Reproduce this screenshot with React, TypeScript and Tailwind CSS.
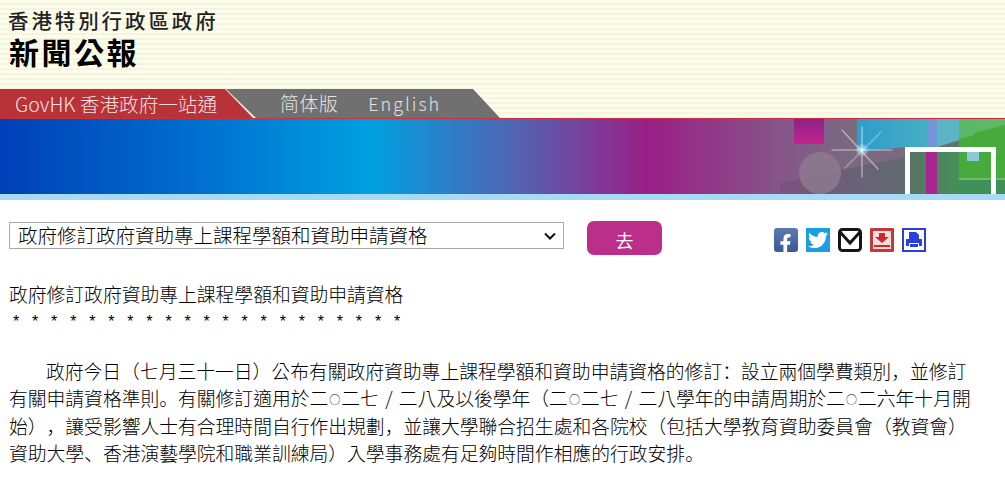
import { FaFacebookF, FaTwitter } from 'react-icons/fa'

const cjk = "font-['Noto_Sans_CJK_TC','Liberation_Sans',sans-serif]"

// the source page's font has a small ring and a spaced slash, so these get their own cells
function Ring() {
  return <span className="inline-block w-[13px] text-center indent-0 text-[11px] leading-none align-[2px]">○</span>
}

function Slash() {
  return <span className="inline-block w-[20px] text-center indent-0">/</span>
}

// low-left punctuation as in the reference
function Pn({ children }: { children: React.ReactNode }) {
  return <span className="font-['Noto_Sans_CJK_SC',sans-serif]">{children}</span>
}

function BannerArt() {
  return (
    <svg className="absolute right-0 top-0 h-[75px] w-[225px]" viewBox="0 0 225 75">
      <defs>
        <linearGradient id="pink" x1="0" y1="0" x2="0" y2="1">
          <stop offset="0" stopColor="#8f2088" />
          <stop offset="1" stopColor="#c2258f" />
        </linearGradient>
        <linearGradient id="sky" x1="0" y1="0" x2="1" y2="0">
          <stop offset="0" stopColor="#2f9ccb" />
          <stop offset="1" stopColor="#45aec4" />
        </linearGradient>
        <linearGradient id="low" x1="0" y1="0" x2="1" y2="0">
          <stop offset="0" stopColor="#7f5080" />
          <stop offset="0.3" stopColor="#6a6076" />
          <stop offset="0.6" stopColor="#5f6c70" />
          <stop offset="1" stopColor="#4f8a5e" />
        </linearGradient>
        <linearGradient id="inner" x1="0" y1="0" x2="1" y2="0">
          <stop offset="0" stopColor="#5a7566" />
          <stop offset="1" stopColor="#458f58" />
        </linearGradient>
        <radialGradient id="glow">
          <stop offset="0" stopColor="#fff" stopOpacity="0.95" />
          <stop offset="0.35" stopColor="#cfe8f5" stopOpacity="0.6" />
          <stop offset="1" stopColor="#fff" stopOpacity="0" />
        </radialGradient>
      </defs>
      <path d="M0 64 L125 38 L225 9 V75 H0Z" fill="url(#low)" />
      <rect x="14" y="0" width="30" height="25" fill="url(#pink)" />
      <path d="M77 0 H147 V28 H125 L77 33Z" fill="url(#sky)" />
      <path d="M147 0 H157 V28 H147Z" fill="#6f96d6" />
      <path d="M157 0 H179 V21 L157 28Z" fill="#5db4c6" />
      <path d="M179 0 H225 V59 H179Z" fill="#47aa3c" />
      <path d="M179 0 H225 V6 L194 14 V0Z" fill="#5fb866" />
      <path d="M179 0 H194 V16 L179 20Z" fill="#5ab968" />
      <rect x="179" y="59" width="46" height="2" fill="#6dbb6a" />
      <rect x="179" y="61" width="46" height="14" fill="#3f8f58" />
      <rect x="130" y="33" width="49" height="42" fill="url(#inner)" />
      <rect x="146" y="28" width="11" height="47" fill="#a8268f" />
      <rect x="187" y="33" width="12" height="9" fill="#8ec6dc" />
      <path d="M125 75 V28 H216 V75 H211 V33 H130 V75Z" fill="#fff" />
      <circle cx="40" cy="54" r="21" fill="#8c7a8e" fillOpacity="0.85" />
      <g stroke="#fff" strokeLinecap="round">
        <path d="M52 31 H112" strokeOpacity="0.4" strokeWidth="1.5" />
        <path d="M82 8 V58" strokeOpacity="0.45" strokeWidth="1.5" />
        <path d="M62 11 L98 50" strokeOpacity="0.45" strokeWidth="1.5" />
        <path d="M65 49 L101 13" strokeOpacity="0.3" strokeWidth="1.5" />
      </g>
      <circle cx="82" cy="31" r="7" fill="url(#glow)" />
    </svg>
  )
}

function MailIcon() {
  return (
    <svg viewBox="0 0 24 24" className="h-6 w-6">
      <rect x="1.5" y="1.5" width="21" height="21" rx="3" fill="#fff" stroke="#151515" strokeWidth="3" />
      <path d="M2 4 L12 15 L22 4" fill="none" stroke="#151515" strokeWidth="3" />
    </svg>
  )
}

function SaveIcon() {
  return (
    <svg viewBox="0 0 24 24" className="h-6 w-6">
      <rect x="0" y="0" width="24" height="24" rx="1" fill="#c23a3c" />
      <rect x="3" y="3" width="18" height="18" fill="#f0dedc" />
      <path d="M9 5 H15 V9 H19 L12 15 L5 9 H9Z" fill="#d0262c" />
      <rect x="4" y="17" width="16" height="2" fill="#d0262c" />
    </svg>
  )
}

function PrintIcon() {
  return (
    <svg viewBox="0 0 24 24" className="h-6 w-6">
      <rect x="0" y="0" width="24" height="24" fill="#2a3fe0" />
      <rect x="2" y="2" width="20" height="20" fill="#fff" />
      <path d="M7 4 H14 L17 7 V11 H7Z" fill="#2a3fe0" />
      <path d="M4 11 H20 V18 H17 V15 H7 V18 H4Z" fill="#2a3fe0" />
      <rect x="8" y="16" width="8" height="3" fill="#2a3fe0" />
    </svg>
  )
}

export default function App() {
  return (
    <div className={`h-[489px] w-[1005px] overflow-hidden bg-white text-black [text-spacing-trim:space-all] ${cjk}`}>
      <header className="h-[89px] bg-[repeating-linear-gradient(180deg,#fdfdec_0px,#fdfdec_3px,#f5f5df_3px,#f5f5df_5px)] pl-[8px] pt-[7px]">
        <div className="text-[20.5px] font-medium leading-[26px] tracking-[2.9px] text-[#222]">香港特別行政區政府</div>
        <div className="pl-px text-[30px] font-bold leading-[36px] tracking-[2.5px]">新聞公報</div>
      </header>

      <div className="relative h-[30px] bg-[repeating-linear-gradient(180deg,#fdfdec_0px,#fdfdec_3px,#f5f5df_3px,#f5f5df_5px)]">
        <nav className="flex h-[29px] w-[500px] items-center bg-[#707070] text-[19px] text-[#e4e4e4] [clip-path:polygon(0_0,473px_0,100%_100%,0_100%)]">
          <div className="h-full w-[256px] bg-[#f0ece0] [clip-path:polygon(0_0,226px_0,100%_100%,0_100%)]">
            <div className="flex h-full w-[253px] items-center bg-[#b83237] pl-[15px] leading-none text-[#f2e2e2] [clip-path:polygon(0_0,225px_0,100%_100%,0_100%)]">
              <span className="whitespace-nowrap text-[19.6px] font-light">GovHK 香港政府一站通</span>
            </div>
          </div>
          <span className="ml-[24px] font-light tracking-[0.4px]">简体版</span>
          <span className="ml-[30px] text-[18px] font-light tracking-[2px]">English</span>
        </nav>
        <div className="h-px bg-[#c8323a]" />
      </div>

      <div className="relative h-[75px] bg-[linear-gradient(90deg,#0040b8_0%,#0070d0_20%,#00a0e0_37%,#5560b0_52%,#9b1f85_64.5%,#85568a_78%,#7a6a80_85%,#7a6a80_100%)]">
        <BannerArt />
      </div>
      <div className="h-[6px] bg-[#a6daf7]" />

      <main className="px-[9px]">
        <form className="flex items-start pt-[21px]">
          <div className="relative mt-px flex h-[27px] w-[555px] items-center border border-[#aaa] bg-white pb-[2px] pl-[8px] text-[19.5px] font-light leading-none">
            <span className="whitespace-nowrap">政府修訂政府資助專上課程學額和資助申請資格</span>
            <svg viewBox="0 0 16 16" className="absolute right-[5px] top-[5px] h-4 w-4" fill="none" stroke="#111" strokeWidth="2">
              <path d="M3 5.5 L8 10.5 L13 5.5" />
            </svg>
          </div>
          <button type="button" className="ml-[23px] h-[34px] w-[75px] rounded-[7px] bg-[#bb2e8a] pt-1 text-[18px] text-white">去</button>
          <div className="ml-[112px] mt-[7px] flex items-center gap-2">
            <span className="flex h-6 w-6 items-end justify-end overflow-hidden rounded-[3px] bg-[linear-gradient(180deg,#5c79b0,#3b5998)] pr-[3px] text-white">
              <FaFacebookF size={19} className="-mb-[1px]" />
            </span>
            <span className="flex h-6 w-6 items-center justify-center bg-[#1a9fe3] text-white">
              <FaTwitter size={20} />
            </span>
            <MailIcon />
            <SaveIcon />
            <PrintIcon />
          </div>
        </form>

        <div className="mt-[25px] text-[18.8px] font-light leading-[27px]">政府修訂政府資助專上課程學額和資助申請資格</div>
        <div className="mt-[3px] flex pl-[4px] font-['Liberation_Sans',sans-serif] text-[16px] leading-[24px]">
          {Array.from({ length: 21 }).map((_, i) => (
            <span key={i} className="w-[19.05px]">*</span>
          ))}
        </div>

        <p className="mt-[23px] w-[963px] indent-[37px] text-[18.8px] font-light leading-[27.4px]">
          政府今日（七月三十一日）公布有關政府資助專上課程學額和資助申請資格的修訂<Pn>：</Pn>設立兩個學費類別<Pn>，</Pn>並修訂有關申請資格準則<Pn>。</Pn>有關修訂適用於二<Ring />二七<Slash />二八及以後學年（二<Ring />二七<Slash />二八學年的申請周期於二<Ring />二六年十月開始）<Pn>，</Pn>讓受影響人士有合理時間自行作出規劃<Pn>，</Pn>並讓大學聯合招生處和各院校（包括大學教育資助委員會（教資會）資助大學<Pn>、</Pn>香港演藝學院和職業訓練局）入學事務處有足夠時間作相應的行政安排<Pn>。</Pn>
        </p>
      </main>
    </div>
  )
}
